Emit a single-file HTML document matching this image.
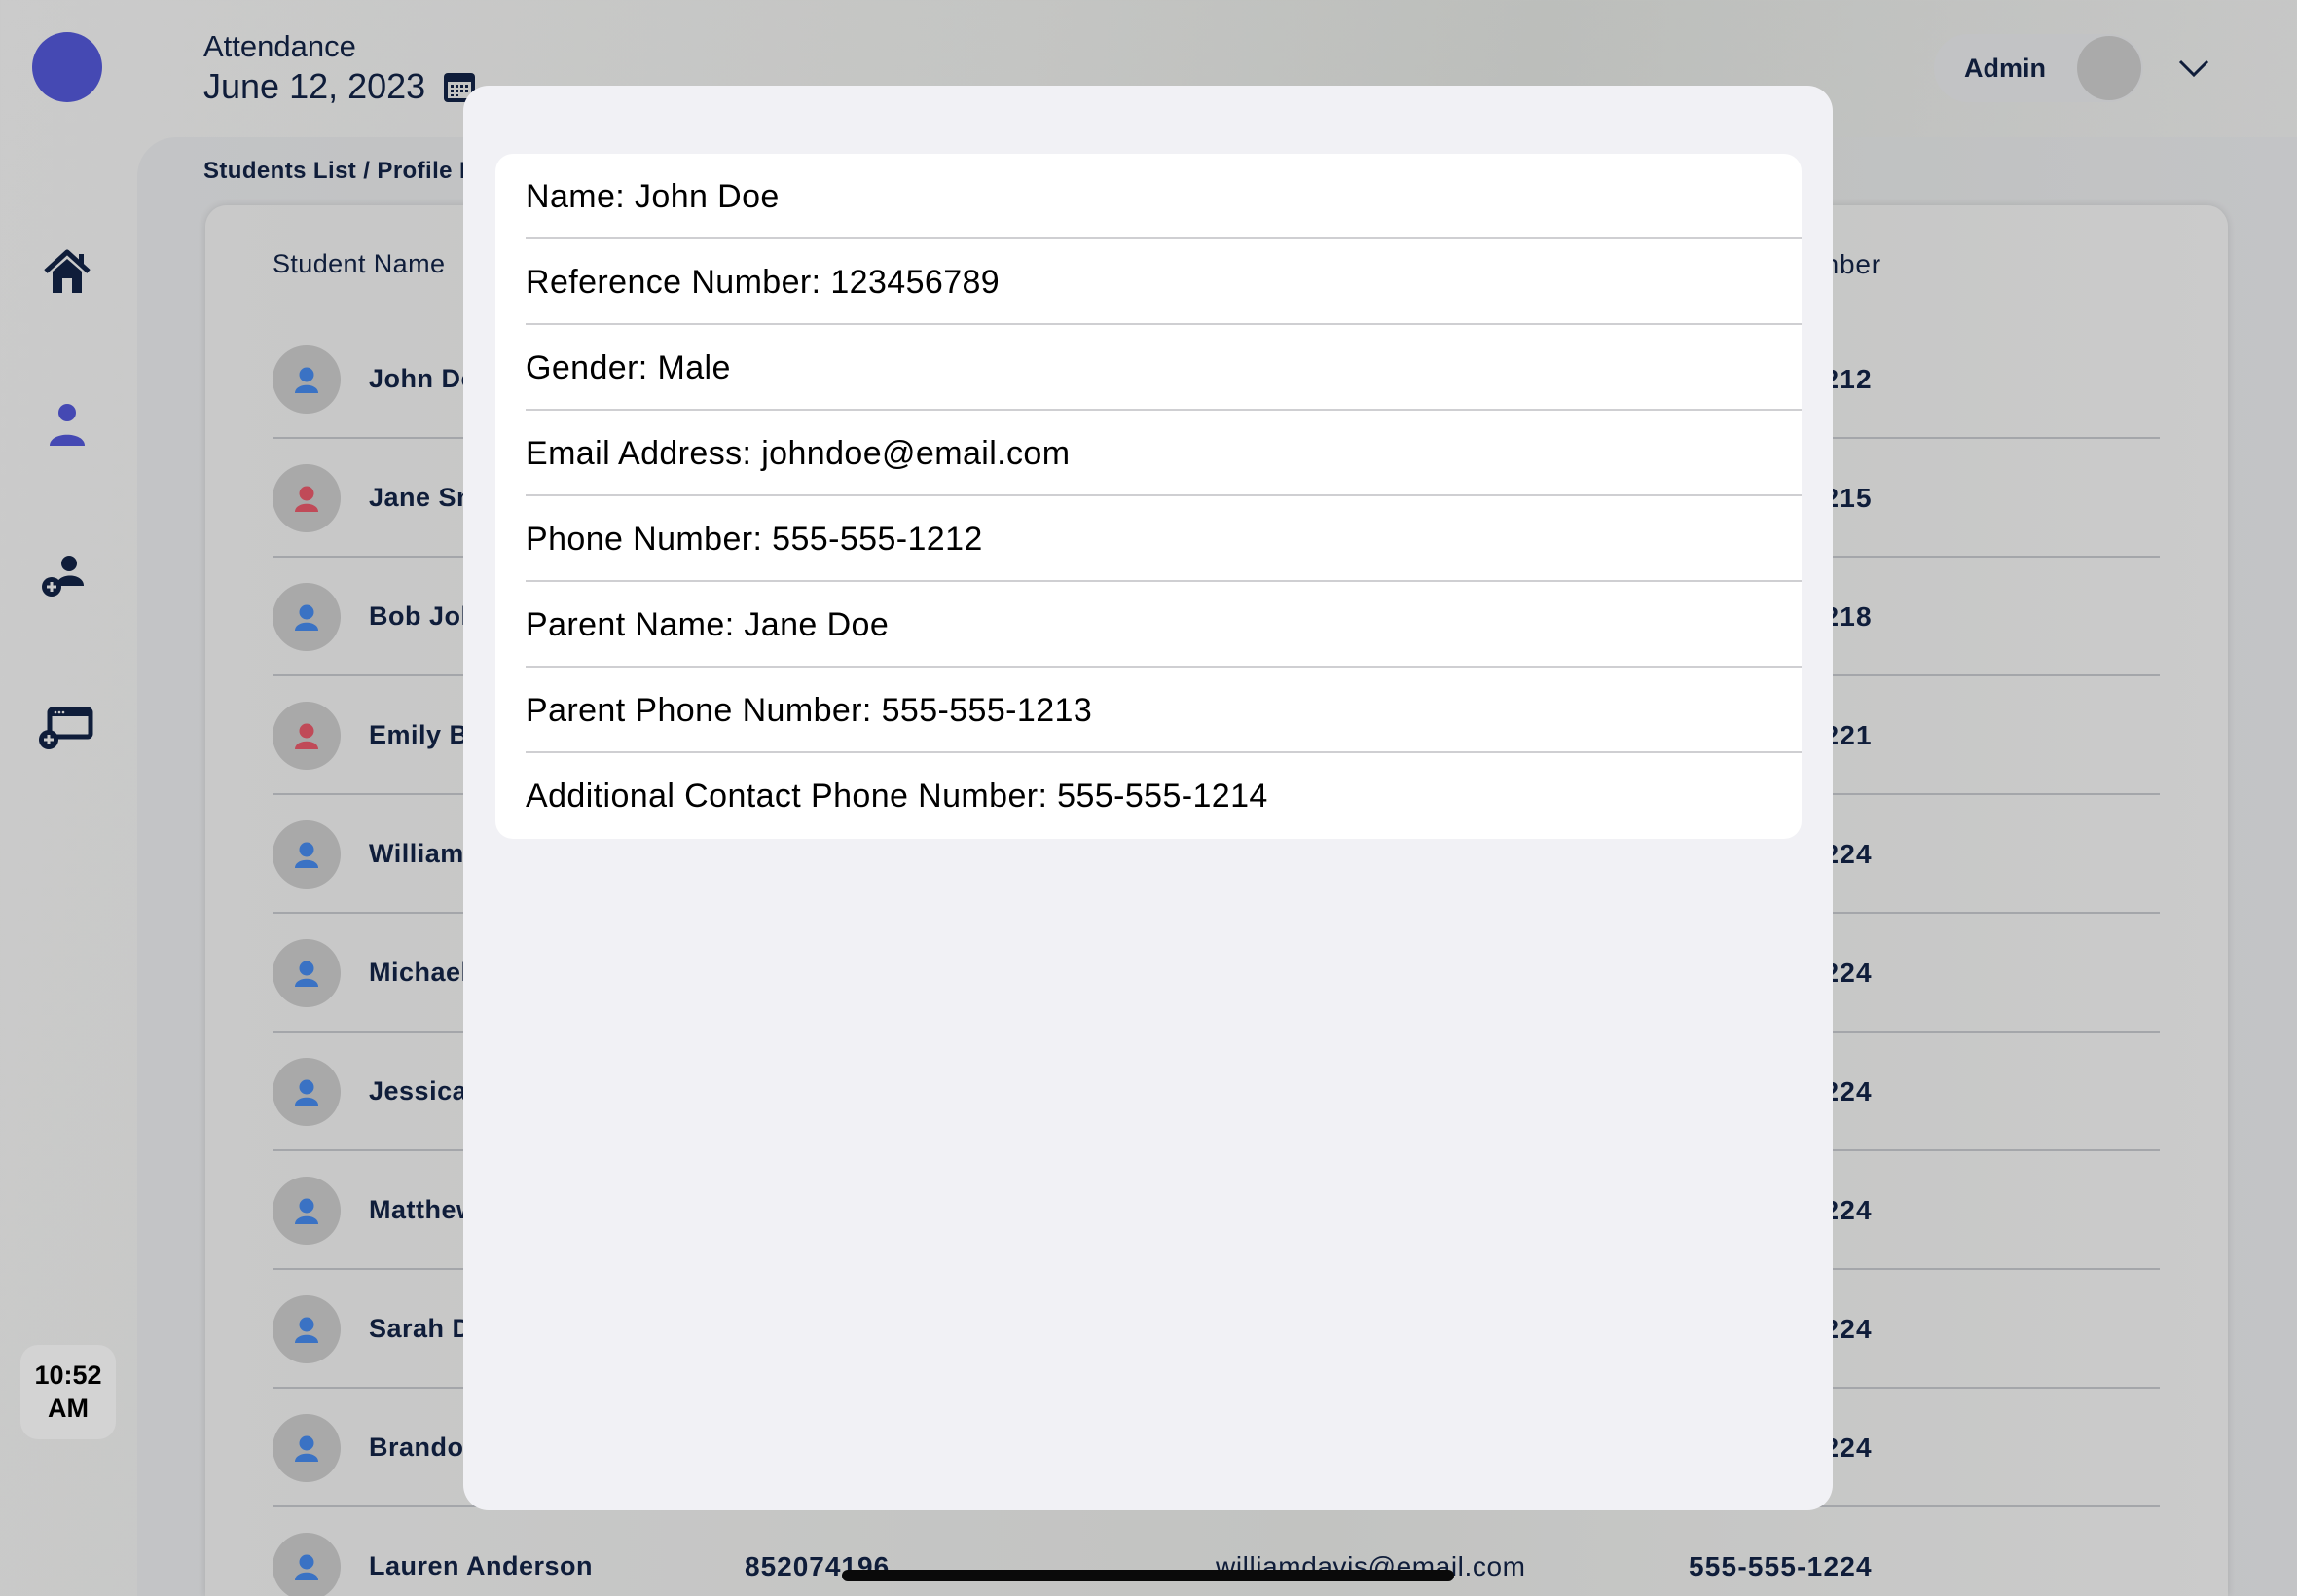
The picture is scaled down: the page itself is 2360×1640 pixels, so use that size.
<!DOCTYPE html>
<html style="overflow:hidden;width:2360px;height:1640px"><head><meta charset="utf-8"><style>
*{margin:0;padding:0;box-sizing:border-box}
body{width:2360px;height:1640px;overflow:hidden;position:relative;background:linear-gradient(100deg,#cbcbcb 0%,#c4c5c3 40%,#bcbebb 60%,#cacaca 100%);font-family:"Liberation Sans",sans-serif;color:#0f1d3a}
.a{position:absolute}
.panel{left:141px;top:141px;width:2219px;height:1499px;border-radius:40px 0 0 0;background:linear-gradient(90deg,#c3c4c6,#bdbfbd 60%,#c3c4c6)}
.card{left:211px;top:211px;width:2078px;height:1429px;border-radius:22px 22px 0 0;background:linear-gradient(90deg,#c9c9c9,#c2c3c1 55%,#cbcbcb);box-shadow:0 0 8px rgba(0,0,0,.12)}
.row{left:280px;width:1939px;height:122px}
.av{position:absolute;left:0;top:26px;width:70px;height:70px;border-radius:50%;background:#a9a9a9}
.nm{position:absolute;left:99px;top:45px;font-size:27px;font-weight:bold;letter-spacing:.5px}
.ln{position:absolute;left:0;bottom:0;width:1939px;height:2px;background:#a4a6aa}
.ph{position:absolute;left:1455px;top:45px;font-size:28px;font-weight:bold;letter-spacing:1.2px}
.modal{left:476px;top:88px;width:1407px;height:1464px;border-radius:26px;background:#f1f1f5}
.inner{left:509px;top:158px;width:1342px;height:704px;border-radius:18px;background:#fff;overflow:hidden}
.it{height:88px;margin-left:31px;border-bottom:2px solid #cfcfd2;font-size:34px;letter-spacing:.4px;line-height:88px;color:#000}
.it:last-child{border-bottom:none}
</style></head><body>
<div class="a" style="left:33px;top:33px;width:72px;height:72px;border-radius:50%;background:#4549b3"></div>
<div class="a" style="left:209px;top:30px;font-size:31px">Attendance</div>
<div class="a" style="left:209px;top:68px;font-size:36px;font-weight:500">June 12, 2023</div>
<svg class="a" style="left:455px;top:74px" width="34" height="32" viewBox="0 0 34 32"><rect x="1" y="1" width="32" height="30" rx="4" fill="#0f1d3a"/><rect x="5" y="10" width="24" height="17" fill="#c4c5c3"/><g fill="#0f1d3a"><rect x="8" y="13" width="3" height="3"/><rect x="13" y="13" width="3" height="3"/><rect x="18" y="13" width="3" height="3"/><rect x="23" y="13" width="3" height="3"/><rect x="8" y="18" width="3" height="3"/><rect x="13" y="18" width="3" height="3"/><rect x="18" y="18" width="3" height="3"/><rect x="23" y="18" width="3" height="3"/><rect x="8" y="23" width="3" height="2"/><rect x="13" y="23" width="3" height="2"/></g></svg>
<div class="a" style="left:1987px;top:35px;width:215px;height:70px;border-radius:35px;background:#c2c3c5"></div>
<div class="a" style="left:2018px;top:55px;font-size:27px;font-weight:bold">Admin</div>
<div class="a" style="left:2134px;top:37px;width:66px;height:66px;border-radius:50%;background:#aaa"></div>
<svg class="a" style="left:2238px;top:60px" width="32" height="20" viewBox="0 0 32 20"><path d="M2 3 L16 17 L30 3" fill="none" stroke="#0f1d3a" stroke-width="3"/></svg>

<svg class="a" style="left:44px;top:255px" width="50" height="50" viewBox="0 0 50 50"><path d="M3 24 L25 4 L47 24" fill="none" stroke="#0f1d3a" stroke-width="5" stroke-linejoin="round"/><rect x="37" y="6" width="5" height="12" fill="#0f1d3a"/><path d="M10 24 L25 11 L40 24 V46 H10Z" fill="#0f1d3a"/><rect x="20" y="31" width="10" height="15" fill="#cbcbcb"/></svg>
<svg class="a" style="left:48px;top:413px" width="42" height="46" viewBox="0 0 42 46"><circle cx="21" cy="11" r="9" fill="#4549b3"/><path d="M3 45 C3 30 39 30 39 45Z" fill="#4549b3"/></svg>
<svg class="a" style="left:40px;top:568px" width="50" height="48" viewBox="0 0 50 48"><circle cx="31" cy="11" r="8" fill="#0f1d3a"/><path d="M18 34 C18 20 46 20 46 34Z" fill="#0f1d3a"/><circle cx="13" cy="35" r="10" fill="#0f1d3a"/><path d="M13 30 V40 M8 35 H18" stroke="#cbcbcb" stroke-width="3"/></svg>
<svg class="a" style="left:38px;top:726px" width="58" height="44" viewBox="0 0 58 44"><rect x="13" y="3" width="42" height="28" rx="3" fill="none" stroke="#0f1d3a" stroke-width="5"/><rect x="13" y="3" width="42" height="7" fill="#0f1d3a"/><g fill="#cbcbcb"><circle cx="19" cy="6" r="1.3"/><circle cx="23" cy="6" r="1.3"/><circle cx="27" cy="6" r="1.3"/></g><circle cx="12" cy="34" r="10" fill="#0f1d3a"/><path d="M12 29 V39 M7 34 H17" stroke="#cbcbcb" stroke-width="3"/></svg>
<div class="a" style="left:21px;top:1382px;width:98px;height:97px;border-radius:18px;background:#d3d3d3;text-align:center;font-size:27px;font-weight:bold;line-height:34px;padding-top:14px;color:#000">10:52<br>AM</div>

<div class="a panel"></div>
<div class="a" style="left:209px;top:162px;font-size:24px;font-weight:bold;letter-spacing:.4px">Students List / Profile Details</div>
<div class="a card"></div>
<div class="a" style="left:280px;top:256px;font-size:27px;letter-spacing:.4px">Student Name</div>
<div class="a" style="left:1735px;top:256px;font-size:28px;letter-spacing:.8px">Phone Number</div>

<div class="a row" style="top:329px"><div class="av"></div><div class="nm">John Doe</div><div class="ph">555-555-1212</div><div class="ln"></div></div>
<div class="a row" style="top:451px"><div class="av"></div><div class="nm">Jane Smith</div><div class="ph">555-555-1215</div><div class="ln"></div></div>
<div class="a row" style="top:573px"><div class="av"></div><div class="nm">Bob Johnson</div><div class="ph">555-555-1218</div><div class="ln"></div></div>
<div class="a row" style="top:695px"><div class="av"></div><div class="nm">Emily Brown</div><div class="ph">555-555-1221</div><div class="ln"></div></div>
<div class="a row" style="top:817px"><div class="av"></div><div class="nm">William Davis</div><div class="ph">555-555-1224</div><div class="ln"></div></div>
<div class="a row" style="top:939px"><div class="av"></div><div class="nm">Michael</div><div class="ph">555-555-1224</div><div class="ln"></div></div>
<div class="a row" style="top:1061px"><div class="av"></div><div class="nm">Jessica</div><div class="ph">555-555-1224</div><div class="ln"></div></div>
<div class="a row" style="top:1183px"><div class="av"></div><div class="nm">Matthew</div><div class="ph">555-555-1224</div><div class="ln"></div></div>
<div class="a row" style="top:1305px"><div class="av"></div><div class="nm">Sarah D</div><div class="ph">555-555-1224</div><div class="ln"></div></div>
<div class="a row" style="top:1427px"><div class="av"></div><div class="nm">Brandon</div><div class="ph">555-555-1224</div><div class="ln"></div></div>
<div class="a row" style="top:1549px"><div class="av"></div><div class="nm">Lauren Anderson</div><div class="nm" style="left:485px;font-size:28px;letter-spacing:1px">852074196</div><div class="nm" style="left:969px;font-weight:normal;font-size:28px;letter-spacing:.6px">williamdavis@email.com</div><div class="ph">555-555-1224</div></div>

<svg class="a" style="left:0;top:0" width="2360" height="1640">
<defs><g id="p"><circle cx="0" cy="0" r="7.5"/><path d="M-12 19 C-12 8 12 8 12 19Z"/></g></defs>
<g fill="#3a72c4">
<use href="#p" x="315" y="385"/><use href="#p" x="315" y="629"/><use href="#p" x="315" y="873"/><use href="#p" x="315" y="995"/><use href="#p" x="315" y="1117"/><use href="#p" x="315" y="1239"/><use href="#p" x="315" y="1361"/><use href="#p" x="315" y="1483"/><use href="#p" x="315" y="1605"/>
</g>
<g fill="#c04a58"><use href="#p" x="315" y="507"/><use href="#p" x="315" y="751"/></g>
</svg>

<div class="a modal"></div>
<div class="a inner">
<div class="it">Name: John Doe</div>
<div class="it">Reference Number: 123456789</div>
<div class="it">Gender: Male</div>
<div class="it">Email Address: johndoe@email.com</div>
<div class="it">Phone Number: 555-555-1212</div>
<div class="it">Parent Name: Jane Doe</div>
<div class="it">Parent Phone Number: 555-555-1213</div>
<div class="it">Additional Contact Phone Number: 555-555-1214</div>
</div>
<div class="a" style="left:865px;top:1613px;width:629px;height:12px;border-radius:6px;background:#0a0a0a"></div>
</body></html>
